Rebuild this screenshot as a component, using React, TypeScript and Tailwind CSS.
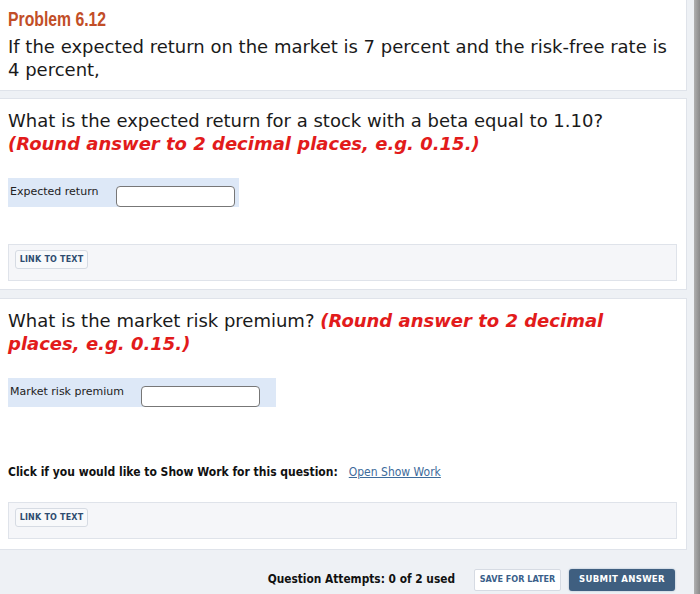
import React from "react";

const tahoma = { fontFamily: '"DejaVu Sans Condensed", "Liberation Sans", sans-serif' };
const arial = { fontFamily: '"Liberation Sans", Arial, sans-serif' };
const verdana = { fontFamily: '"DejaVu Sans", Verdana, sans-serif' };

function LinkToText() {
  return (
    <div className="ml-2 mr-[9px] flex h-[37px] items-start border border-[#dfe3ea] bg-[#f5f6f9] pl-[6px] pt-[5px]">
      <button
        className="h-[19px] w-[73px] rounded-[3px] border border-[#d6dbe3] bg-[#f8f9fb] text-[8px] font-bold leading-none tracking-[0.2px] text-[#2f4c70]"
        style={verdana}
      >
        LINK TO TEXT
      </button>
    </div>
  );
}

function AnswerRow({ label, labelWidth, padRight }: { label: string; labelWidth: string; padRight: string }) {
  return (
    <div className={`ml-2 flex h-[29px] w-fit items-end bg-[#dde8f7] ${padRight}`}>
      <div className={`${labelWidth} self-center pl-[2px] text-[11px] text-[#222]`} style={verdana}>
        {label}
      </div>
      <input className="h-[21px] w-[119px] rounded-[4px] border border-[#777] bg-white outline-none" />
    </div>
  );
}

export default function App() {
  return (
    <div className="flex h-[594px] w-[700px] overflow-hidden bg-[#eef1f5]">
      <div className="flex w-[687px] flex-col">
        {/* problem statement */}
        <div className="h-[91px] border-b border-r border-[#dfe3ea] bg-white pl-2 pt-[7px]">
          <h1 className="text-[21px] font-bold leading-[24px] text-[#c24e27]" style={arial}>
            <span className="inline-block origin-left scale-x-[0.75]">Problem 6.12</span>
          </h1>
          <p className="mt-[4px] text-[18px] leading-[23px] text-[#1a1a1a]" style={verdana}>
            If the expected return on the market is 7 percent and the risk-free rate is
            <br />4 percent,
          </p>
        </div>

        {/* question 1 */}
        <div className="mt-[7px] h-[192px] border-y border-r border-[#dfe3ea] bg-white">
          <p className="pl-2 pt-[10px] text-[18px] leading-[23px] text-[#1a1a1a]" style={verdana}>
            What is the expected return for a stock with a beta equal to 1.10?
            <br />
            <span className="font-bold italic text-[#e21b1b]">(Round answer to 2 decimal places, e.g. 0.15.)</span>
          </p>
          <div className="mt-[23px]">
            <AnswerRow label="Expected return" labelWidth="w-[108px]" padRight="pr-1" />
          </div>
          <div className="mt-[37px]">
            <LinkToText />
          </div>
        </div>

        {/* question 2 */}
        <div className="mt-[8px] h-[252px] border-y border-r border-[#dfe3ea] bg-white">
          <p className="pl-2 pt-[10px] text-[18px] leading-[23px] text-[#1a1a1a]" style={verdana}>
            What is the market risk premium?{" "}
            <span className="font-bold italic text-[#e21b1b]">
              (Round answer to 2 decimal
              <br />
              places, e.g. 0.15.)
            </span>
          </p>
          <div className="mt-[23px]">
            <AnswerRow label="Market risk premium" labelWidth="w-[133px]" padRight="pr-[16px]" />
          </div>
          <div className="mt-[56px] flex items-baseline pl-2 text-[12px]" style={tahoma}>
            <span className="font-bold text-[#111]">Click if you would like to Show Work for this question:</span>
            <a className="ml-[11px] text-[#3d6b9b] underline" href="#">
              Open Show Work
            </a>
          </div>
          <div className="mt-[21px]">
            <LinkToText />
          </div>
        </div>

        {/* footer */}
        <div className="flex flex-1 items-center justify-end pr-[12px] pt-[15px]">
          <span className="mr-[19px] text-[11.8px] font-bold text-[#111]" style={tahoma}>
            Question Attempts: 0 of 2 used
          </span>
          <button
            className="mr-[8px] h-[22px] w-[87px] rounded-[2px] border border-[#d6dbe3] bg-white text-[9px] font-bold text-[#3a5f8a]"
            style={tahoma}
          >
            SAVE FOR LATER
          </button>
          <button
            className="h-[22px] w-[106px] rounded-[3px] bg-[#3f5f80] text-[9.5px] font-bold tracking-[0.3px] text-white shadow-[0_0_2px_#9aaec4]"
            style={tahoma}
          >
            SUBMIT ANSWER
          </button>
        </div>
      </div>
      <div className="w-[7px]" />
      <div className="w-[6px] bg-gradient-to-r from-[#b0b0b0] to-[#8a8a8a]" />
    </div>
  );
}
